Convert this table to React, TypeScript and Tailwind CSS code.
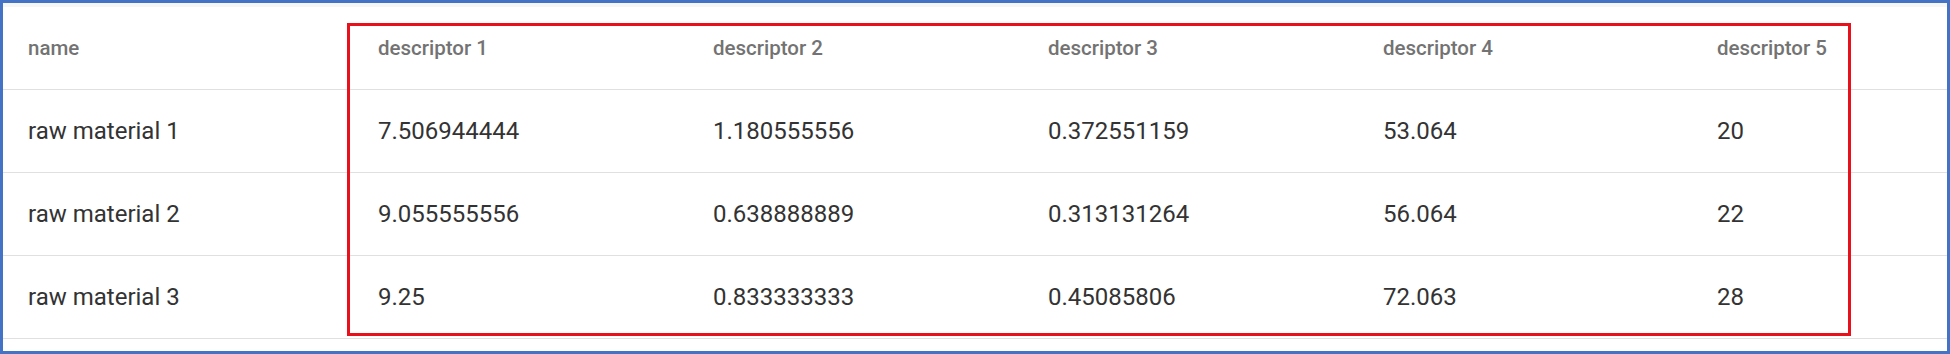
const columns = ['name', 'descriptor 1', 'descriptor 2', 'descriptor 3', 'descriptor 4', 'descriptor 5'];

const rows = [
  ['raw material 1', '7.506944444', '1.180555556', '0.372551159', '53.064', '20'],
  ['raw material 2', '9.055555556', '0.638888889', '0.313131264', '56.064', '22'],
  ['raw material 3', '9.25', '0.833333333', '0.45085806', '72.063', '28'],
];

const grid = 'grid grid-cols-[350px_335px_335px_335px_334px_1fr]';

export default function App() {
  return (
    <div className="relative w-[1950px] h-[354px] bg-white border-[3px] border-[#4472c4] font-['Roboto',sans-serif] overflow-hidden">
      {/* faint strip above the table */}
      <div className="h-[4px] bg-[#f6f6f6]" />

      <div className="w-full">
        {/* header */}
        <div className={`${grid} h-[83px] items-center border-b border-[#e0e0e0]`}>
          {columns.map((c) => (
            <div key={c} className="pl-[25px] text-[20.5px] font-medium text-[#737373]">
              {c}
            </div>
          ))}
        </div>

        {/* body */}
        {rows.map((r) => (
          <div key={r[0]} className={`${grid} h-[83px] items-center border-b border-[#e0e0e0]`}>
            {r.map((v, i) => (
              <div key={i} className="pl-[25px] text-[24px] text-[#333333]">
                {v}
              </div>
            ))}
          </div>
        ))}
      </div>

      {/* red highlight around the descriptor columns */}
      <div className="absolute left-[344px] top-[20px] w-[1504px] h-[313px] border-[3px] border-[#e8101a] pointer-events-none" />
    </div>
  );
}
